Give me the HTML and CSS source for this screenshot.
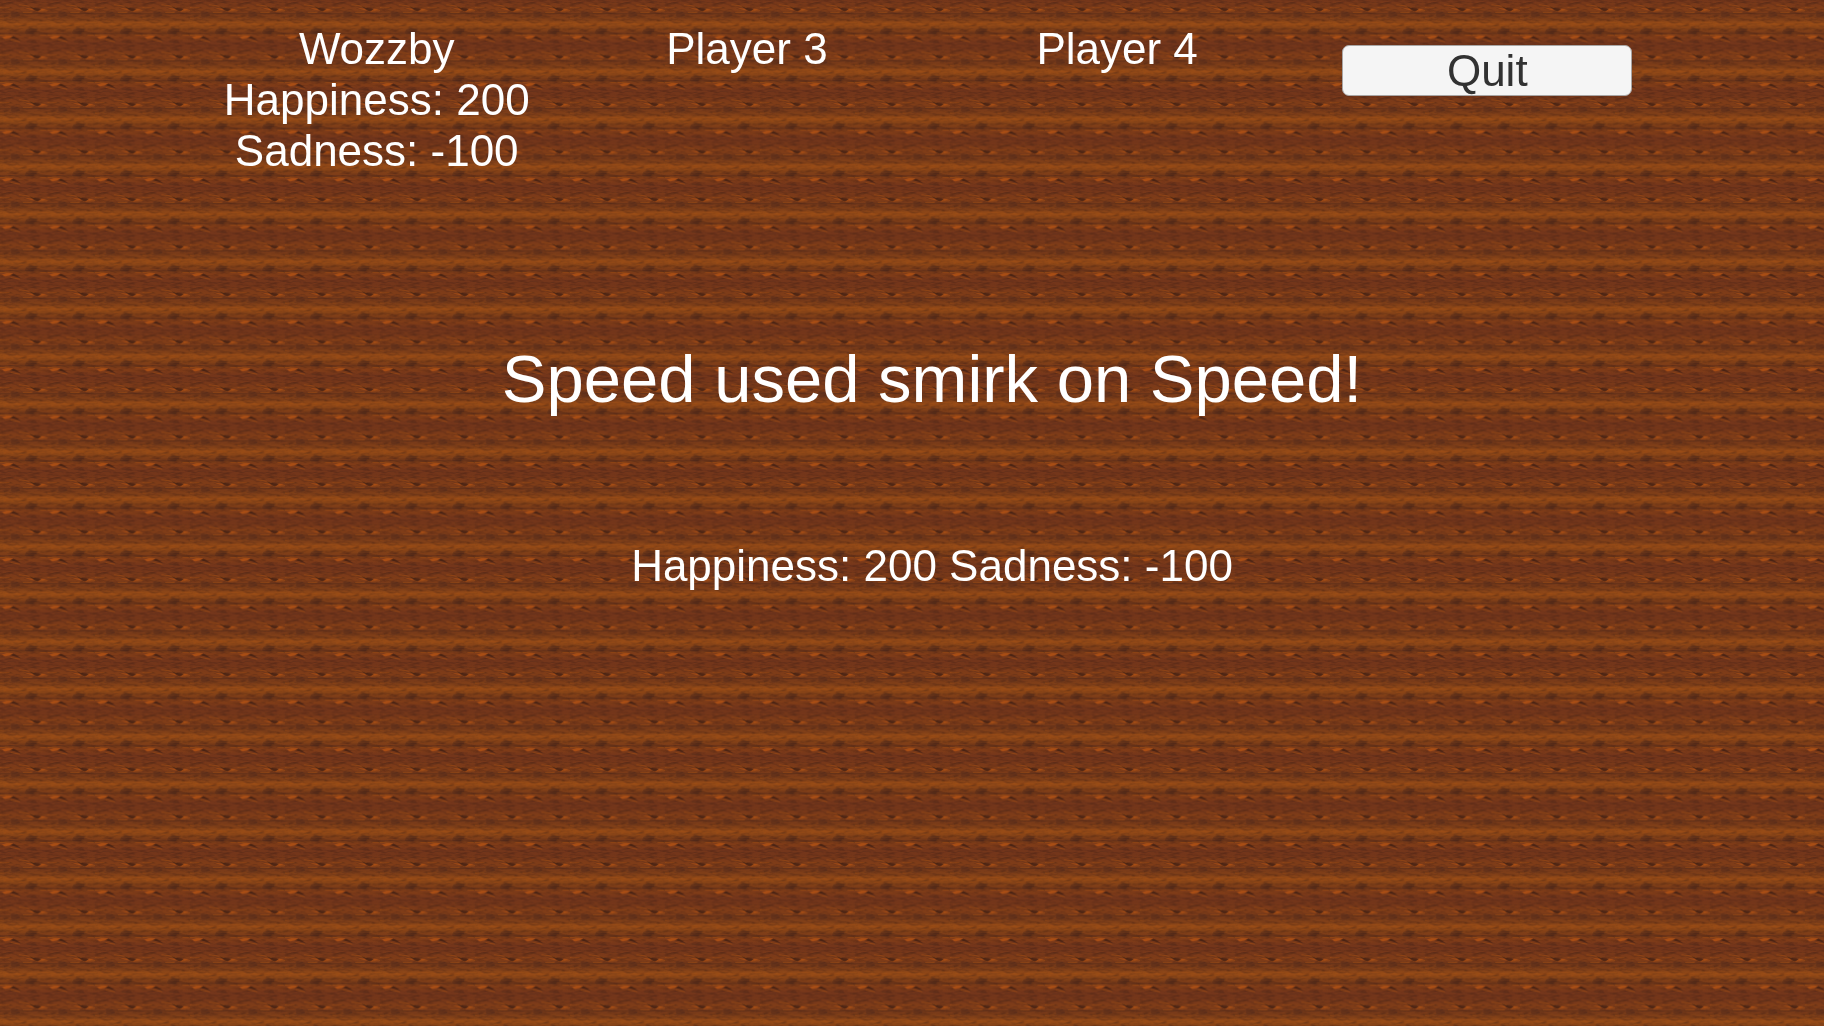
FILE: index.html
```
<!DOCTYPE html>
<html lang="en">
<head>
    <meta charset="UTF-8">
    <meta name="viewport" content="width=device-width, initial-scale=1.0">
    <title>Battle</title>
    <link rel="stylesheet" href="styles.css">
</head>
<body>
    <!-- Wooden table behind everything -->
    <svg class="wood" viewBox="0 0 1920 1080" preserveAspectRatio="xMinYMin slice" aria-hidden="true">
        <defs>
            <linearGradient id="boards" x1="0" y1="0" x2="0" y2="1">
                <stop offset="0" stop-color="#74361a"/>
                <stop offset="0.1" stop-color="#7b3a19"/>
                <stop offset="0.2" stop-color="#803d18"/>
                <stop offset="0.3" stop-color="#7a3b19"/>
                <stop offset="0.42" stop-color="#834118"/>
                <stop offset="0.5" stop-color="#984c17"/>
                <stop offset="0.58" stop-color="#884417"/>
                <stop offset="0.7" stop-color="#7b3b18"/>
                <stop offset="0.8" stop-color="#803c18"/>
                <stop offset="0.9" stop-color="#74361b"/>
                <stop offset="1" stop-color="#74361a"/>
            </linearGradient>
            <filter id="fibres" x="0" y="0" width="50" height="50" filterUnits="userSpaceOnUse" color-interpolation-filters="sRGB">
                <feTurbulence type="fractalNoise" baseFrequency="0.1 0.4" numOctaves="3" seed="7" stitchTiles="stitch"/>
                <feColorMatrix values="0 0 0 0 0.2  0 0 0 0 0.09  0 0 0 0 0.07  2.4 0 0 0 -1"/>
            </filter>
            <pattern id="grain" width="50" height="50" patternUnits="userSpaceOnUse">
                <rect width="50" height="50" fill="url(#boards)"/>
                <rect width="50" height="50" filter="url(#fibres)" opacity="0.45"/>
                <g fill="none" stroke="#a85012" stroke-width="1" opacity="0.55">
                    <path d="M0 8h10M20 5l8 1 8 2M38 12l12-1M0 24h8M16 25h18M40 23h10M4 27h10M28 26h12M0 37h8M42 37h8M11 42l10 2M24 13h10M0 19l10-1M20 29l10-1"/>
                </g>
                <g fill="none" stroke="#3f2019" stroke-width="1" opacity="0.35">
                    <path d="M0 14h50M0 35h50M4 18h12M30 31h10M8 46h9M28 44h10M6 3h8M34 2h8M48 36l4 2"/>
                </g>
                <g fill="#3a1f18" opacity="0.35">
                    <ellipse cx="16" cy="16" rx="5" ry="2"/>
                    <ellipse cx="15" cy="13" rx="4" ry="1"/>
                    <ellipse cx="33" cy="32" rx="6" ry="2"/>
                    <ellipse cx="31" cy="34" rx="5" ry="2"/>
                </g>
                <path fill="#3a1c12" opacity="0.7" d="M30 6l5 2 7 1 2 2-5 1-4-2zM10 39l4-1 4 2 4 3-7-2z"/>
                <path fill="#b65414" opacity="0.75" d="M26 8l8 1 2 2-5-1zM40 12l4-3 5 1-4 1zM2 39l7-2 5 1-4 2-5 1z"/>
            </pattern>
        </defs>
        <rect width="1920" height="1080" fill="url(#grain)"/>
    </svg>

    <header class="top-bar">
        <div class="player">Wozzby<br>Happiness: 200<br>Sadness: -100</div>
        <div class="player">Player 3</div>
        <div class="player">Player 4</div>
        <button type="button" class="quit">Quit</button>
    </header>

    <main class="battle">
        <h1>Speed used smirk on Speed!</h1>
        <p class="stats">Happiness: 200 Sadness: -100</p>
    </main>
</body>
</html>
```
FILE: styles.css
```
* {
    box-sizing: border-box;
}
body {
    margin: 0;
    min-height: 100vh;
    padding-left: 40px;
    background: #703519;
    color: #fff;
    font-family: "Liberation Sans", Arial, sans-serif;
    font-size: 44px;
    line-height: 51px;
    text-align: center;
}
/* sits under the page text */
.wood {
    position: fixed;
    top: 0;
    left: 0;
    width: 100%;
    height: 100%;
    z-index: -1;
}
.top-bar {
    display: grid;
    grid-template-columns: repeat(4, 1fr);
    align-items: start;
    width: 83%;
    margin: 0 auto;
    padding-top: 23px;
}
.quit {
    height: 51px;
    margin: 22px 40px 0;
    padding: 0;
    border: 1px solid #a8a5a4;
    border-radius: 7px;
    background: #f5f5f5;
    color: #323232;
    font: inherit;
    line-height: 49px;
    cursor: pointer;
}
.battle {
    padding-top: 164px;
}
h1 {
    margin: 0;
    font-size: 67px;
    font-weight: normal;
    line-height: 78px;
}
.stats {
    margin: 122px 0 0;
}
```
